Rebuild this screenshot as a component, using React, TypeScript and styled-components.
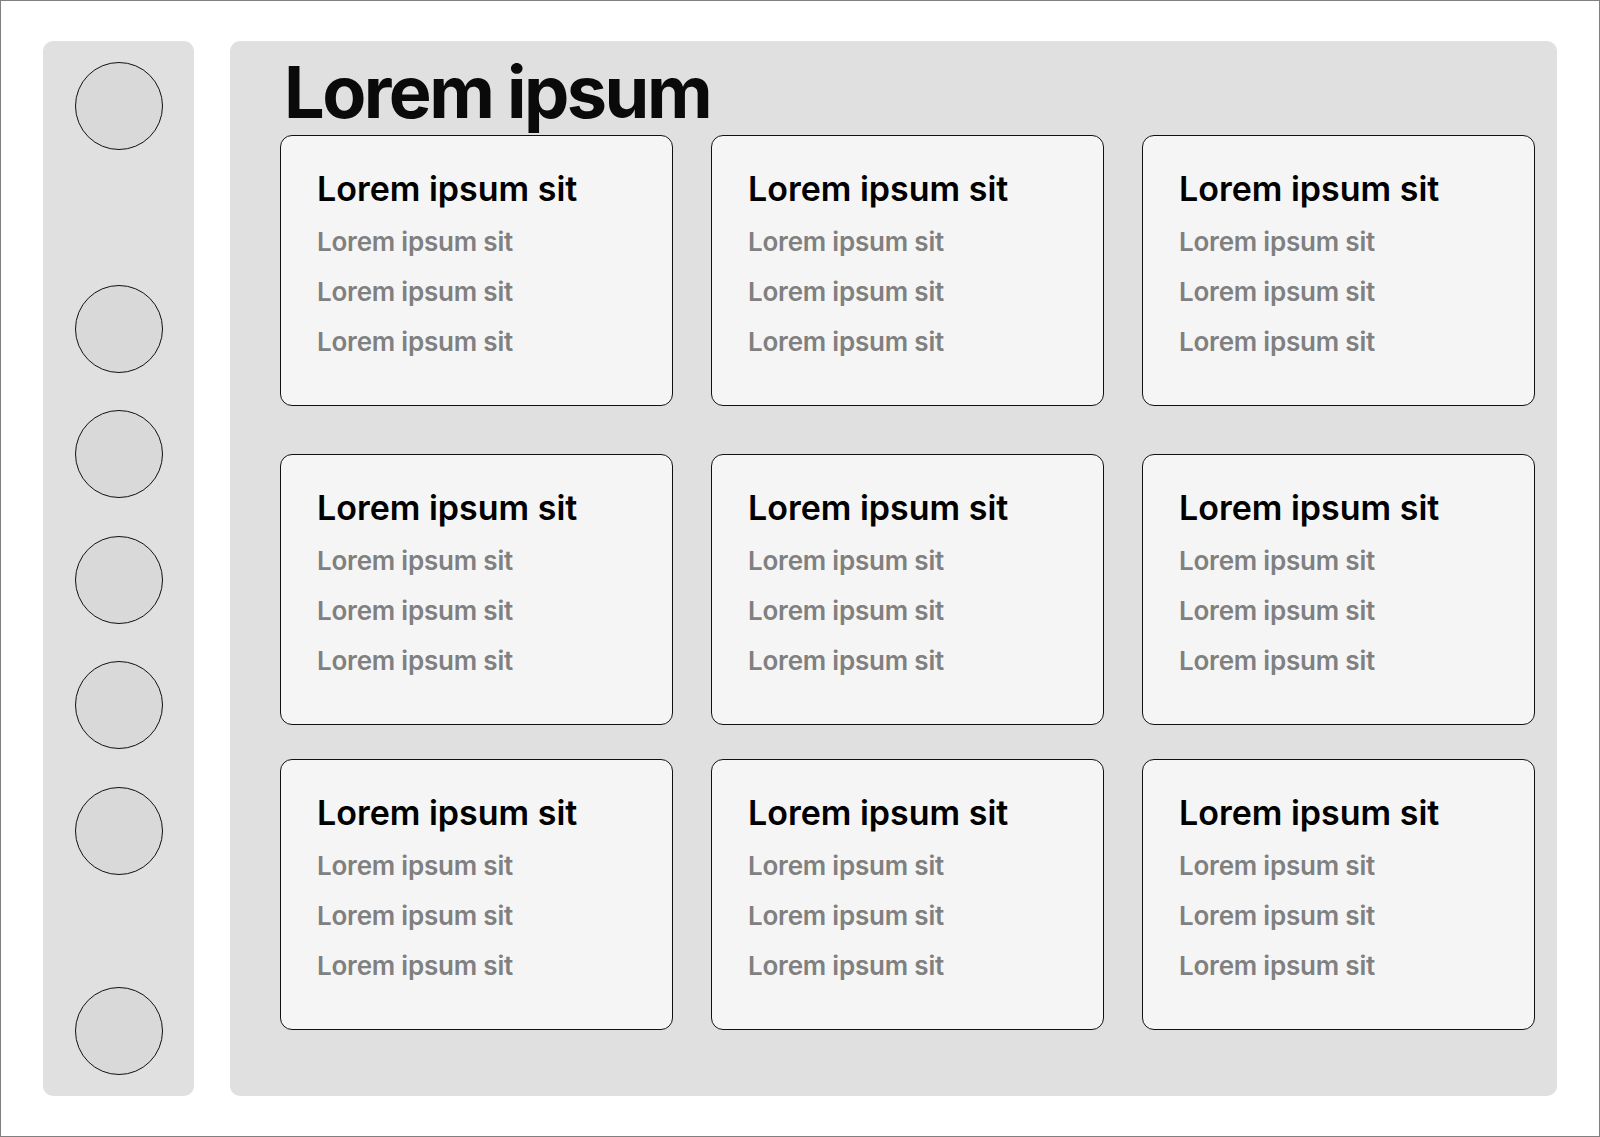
import React from "react";
import styled, { createGlobalStyle } from "styled-components";

const GlobalStyle = createGlobalStyle`
  * {
    box-sizing: border-box;
  }
  body {
    margin: 0;
    font-family: Inter, "Noto Sans", sans-serif;
    background: #ffffff;
  }
`;

const Page = styled.div`
  width: 1600px;
  height: 1137px;
  border: 1px solid #808080;
  padding: 40px 42px;
  display: flex;
  gap: 36px;
`;

const Sidebar = styled.nav`
  width: 151px;
  flex-shrink: 0;
  background: #e0e0e0;
  border-radius: 10px;
  padding: 21px 0;
  display: flex;
  flex-direction: column;
  align-items: center;
`;

const NavGroup = styled.div`
  margin-top: 134.5px;
  display: flex;
  flex-direction: column;
  gap: 37.5px;
`;

const Circle = styled.div<{ $bottom?: boolean }>`
  width: 88px;
  height: 88px;
  border-radius: 50%;
  border: 1px solid #111111;
  background: #d9d9d9;
  margin-top: ${(p) => (p.$bottom ? "auto" : "0")};
`;

const Main = styled.main`
  flex: 1;
  background: #e0e0e0;
  border-radius: 10px;
  padding: 15px 22px 0 50px;
`;

const Title = styled.h1`
  margin: 0 0 7px;
  padding-left: 4px;
  font-size: 72px;
  line-height: 72px;
  font-weight: 700;
  letter-spacing: -0.035em;
  color: #0a0a0a;
`;

const CardRow = styled.div<{ $gap: number }>`
  display: grid;
  grid-template-columns: repeat(3, 1fr);
  column-gap: 38px;
  margin-top: ${(p) => p.$gap}px;
`;

const Card = styled.section`
  height: 271px;
  background: #f5f5f5;
  border: 1px solid #111111;
  border-radius: 12px;
  padding: 33px 34px 0 36px;
`;

const CardTitle = styled.h2`
  margin: 0 0 8px;
  font-size: 34px;
  line-height: 40px;
  font-weight: 600;
  color: #000000;
`;

const CardLine = styled.p`
  margin: 0;
  font-size: 26px;
  line-height: 50px;
  font-weight: 600;
  letter-spacing: -0.008em;
  color: #808080;
`;

const rowGaps = [0, 48, 34];

export default function App() {
  return (
    <>
      <GlobalStyle />
      <Page>
        <Sidebar>
          <Circle />
          <NavGroup>
            {[0, 1, 2, 3, 4].map((i) => (
              <Circle key={i} />
            ))}
          </NavGroup>
          <Circle $bottom />
        </Sidebar>
        <Main>
          <Title>Lorem ipsum</Title>
          {rowGaps.map((gap, r) => (
            <CardRow key={r} $gap={gap}>
              {[0, 1, 2].map((c) => (
                <Card key={c}>
                  <CardTitle>Lorem ipsum sit</CardTitle>
                  <CardLine>Lorem ipsum sit</CardLine>
                  <CardLine>Lorem ipsum sit</CardLine>
                  <CardLine>Lorem ipsum sit</CardLine>
                </Card>
              ))}
            </CardRow>
          ))}
        </Main>
      </Page>
    </>
  );
}
